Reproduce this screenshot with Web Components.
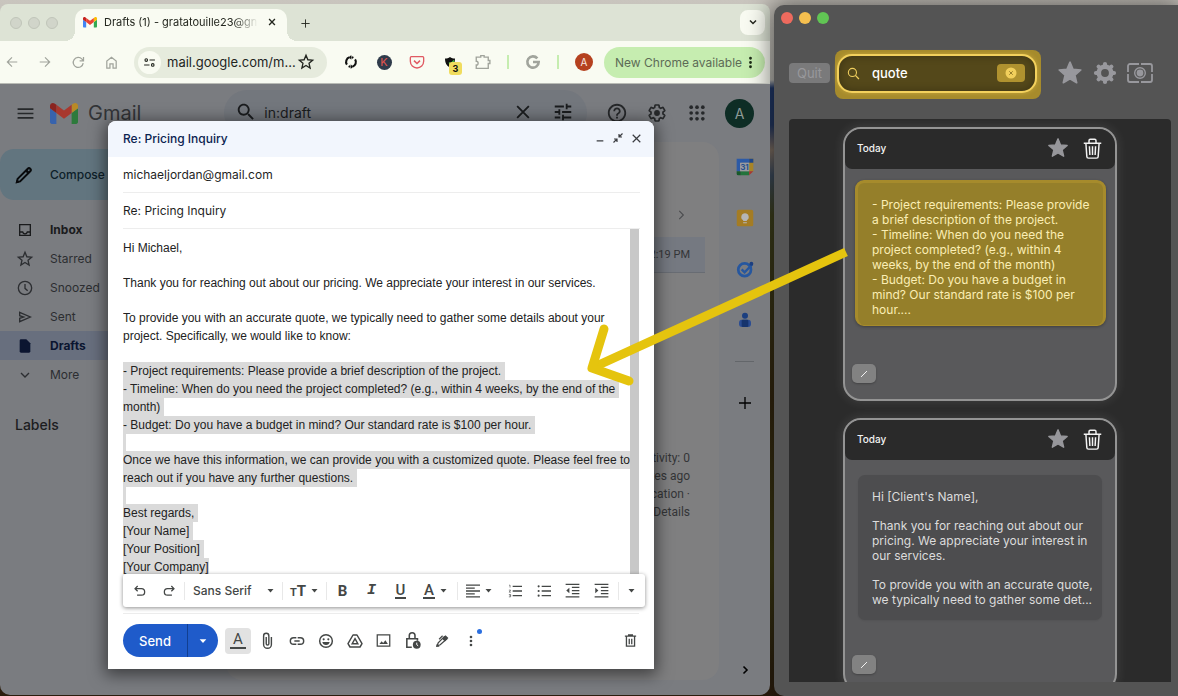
<!DOCTYPE html>
<html lang="en">
<head>
<meta charset="utf-8">
<title>Drafts (1)</title>
<style>
html, body { margin: 0; height: 100%; overflow: hidden; }
body { font-family: Inter, "Liberation Sans", sans-serif; }
</style>
</head>
<body>
<desk-top></desk-top>
<script>
const BASE = `:host,*{box-sizing:border-box}
button,input,select{font:inherit;color:inherit;background:none;border:0;padding:0;margin:0;outline:0;min-width:0}
button,a{display:flex;align-items:center;justify-content:center;flex:none;text-decoration:none;color:inherit;white-space:nowrap}`;

function define(name, css, html) {
  const tpl = document.createElement('template');
  tpl.innerHTML = `<style>${BASE}${css}</style>${html}`;
  customElements.define(name, class extends HTMLElement {
    constructor() {
      super();
      this.attachShadow({ mode: 'open' }).append(tpl.content.cloneNode(true));
    }
  });
}

const line = (d, w = 2) => `<path d="${d}" fill="none" stroke="currentColor" stroke-width="${w}"/>`;
const fill = d => `<path d="${d}" fill="currentColor"/>`;
const GEAR = 'M19.14 12.94c.04-.3.06-.61.06-.94 0-.32-.02-.64-.07-.94l2.03-1.58a.49.49 0 0 0 .12-.61l-1.92-3.32a.488.488 0 0 0-.59-.22l-2.39.96c-.5-.38-1.03-.7-1.62-.94l-.36-2.54a.484.484 0 0 0-.48-.41h-3.84c-.24 0-.43.17-.47.41l-.36 2.54c-.59.24-1.13.57-1.62.94l-2.39-.96c-.22-.08-.47 0-.59.22L2.74 8.87c-.12.21-.08.47.12.61l2.03 1.58c-.05.3-.09.63-.09.94s.02.64.07.94l-2.03 1.58a.49.49 0 0 0-.12.61l1.92 3.32c.12.22.37.29.59.22l2.39-.96c.5.38 1.03.7 1.62.94l.36 2.54c.05.24.24.41.48.41h3.84c.24 0 .44-.17.47-.41l.36-2.54c.59-.24 1.13-.56 1.62-.94l2.39.96c.22.08.47 0 .59-.22l1.92-3.32c.12-.22.07-.47-.12-.61l-2.01-1.58z';
const STAR = 'M12 17.27 18.18 21l-1.64-7.03L22 9.24l-7.19-.61L12 2 9.19 8.63 2 9.24l5.46 4.73L5.82 21z';
const ICONS = {
  back: line('M21 12H4M12 4l-8 8 8 8'),
  forward: line('M3 12h17M12 4l8 8-8 8'),
  reload: line('M19.5 13A8 8 0 1 1 17.6 6.6L20 9M20 3v6.2h-6.2'),
  home: line('M4.5 21V9.5L12 3.5l7.5 6V21h-5v-7h-5v7z'),
  site: `<circle cx="6" cy="7.5" r="2.4" fill="none" stroke="currentColor" stroke-width="2"/><circle cx="18" cy="16.5" r="2.4" fill="none" stroke="currentColor" stroke-width="2"/>` + line('M12 7.5h10M2 16.5h10'),
  staro: `<path d="${STAR}" fill="none" stroke="currentColor" stroke-width="2"/>`,
  star: `<path d="${STAR}" fill="currentColor" stroke="currentColor" stroke-width="1.5" stroke-linejoin="round"/>`,
  sync: line('M9.500 4A8.200 8.200 0 0 0 5 16.500M14.500 20A8.200 8.200 0 0 0 19 7.500', 3.600) + line('M13 3.800A8.200 8.200 0 0 1 16 4.800M11 20.200A8.200 8.200 0 0 1 8 19.200', 3.600) + fill('M12.500 0v8l-4-4zM11.500 24v-8l4 4z'),
  pocket: line('M3.5 4h17a1.5 1.5 0 0 1 1.5 1.5V11a10 10 0 0 1-20 0V5.500A1.5 1.500 0 0 1 3.500 4z') + line('M7.500 10l4.500 4.200 4.500-4.200', 2.4),
  shield: fill('M2 5c4 0 7-1 10-3 3 2 6 3 10 3 0 9-3 14-10 18C5 19 2 14 2 5z') + '<path d="M10 13l3 3 7-7" fill="none" stroke="#43c443" stroke-width="2.500"/>',
  puzzle: line('M3 7.500V5.500h6V3.500h4.500v2H19V10h2.200v4H19v6.500H3V16a2.500 2.500 0 0 0 0-5z', 1.800),
  google: line('M18.5 6.500A8.500 8.500 0 1 0 20.500 12H12', 4),
  dots: fill('M12 8a2 2 0 1 0 0-4 2 2 0 0 0 0 4zm0 2a2 2 0 1 0 0 4 2 2 0 0 0 0-4zm0 6a2 2 0 1 0 0 4 2 2 0 0 0 0-4z'),
  chev: line('M6 9l6 6 6-6', 3),
  chevthin: line('M6 9l6 6 6-6', 2),
  right: line('M9 5l7 7-7 7', 2),
  rightbold: line('M9 5l7 7-7 7', 3.200),
  plus: line('M12 3v18M3 12h18', 2),
  close: line('M5 5l14 14M19 5L5 19', 2.200),
  closebold: line('M5 5l14 14M19 5L5 19', 3.200),
  menu: fill('M2 18.500h20v-2H2zm0-5.500h20v-2H2zm0-7.500v2h20v-2z'),
  search: fill('M15.500 14h-.79l-.28-.27C15.410 12.590 16 11.110 16 9.500 16 5.910 13.090 3 9.500 3S3 5.910 3 9.500 5.910 16 9.500 16c1.610 0 3.090-.59 4.230-1.570l.27.28v.79l5 4.990L20.490 19l-4.990-5zm-6 0C7.010 14 5 11.990 5 9.500S7.010 5 9.500 5 14 7.010 14 9.500 11.990 14 9.500 14z'),
  tune: fill('M3 17v2h6v-2H3zM3 5v2h10V5H3zm10 16v-2h8v-2h-8v-2h-2v6h2zM7 9v2H3v2h4v2h2V9H7zm14 4v-2H11v2h10zm-6-4h2V7h4V5h-4V3h-2v6z'),
  help: fill('M11 18h2v-2h-2v2zm1-16C6.480 2 2 6.480 2 12s4.480 10 10 10 10-4.480 10-10S17.520 2 12 2zm0 18c-4.410 0-8-3.590-8-8s3.590-8 8-8 8 3.590 8 8-3.590 8-8 8zm0-14c-2.210 0-4 1.790-4 4h2c0-1.100.9-2 2-2s2 .9 2 2c0 2-3 1.750-3 5h2c0-2.250 3-2.500 3-5 0-2.210-1.790-4-4-4z'),
  gear: line(GEAR) + '<circle cx="12" cy="12" r="3.500" fill="currentColor"/>',
  cog: '<g fill="none" stroke="currentColor"><circle cx="12" cy="12" r="6.200" stroke-width="4.600"/><path stroke-width="4.200" stroke-linecap="round" d="M12 3v2M12 19v2M3 12h2M19 12h2M5.640 5.640l1.400 1.400M16.960 16.960l1.400 1.400M5.640 18.360l1.400-1.400M16.960 7.040l1.400-1.400"/></g>',
  capture: '<g fill="none" stroke="currentColor" stroke-width="1.800"><path d="M11 3H2A2 2 0 0 0 0 5v6M13 3h9a2 2 0 0 1 2 2v6M0 13V19a2 2 0 0 0 2 2h9M24 13V19a2 2 0 0 1-2 2h-9"/><circle cx="12" cy="12" r="5.300" stroke-width="1.400"/></g><circle cx="12" cy="12" r="3.400" fill="currentColor"/>',
  apps: '<g fill="currentColor">' + [5, 12, 19].flatMap(y => [5, 12, 19].map(x => `<circle cx="${x}" cy="${y}" r="2.200"/>`)).join('') + '</g>',
  pencil: '<path d="M3.500 20.500l.8-3.800L16.500 4.500a2 2 0 0 1 3 3L7.300 19.700z" fill="none" stroke="currentColor" stroke-width="2.400"/>' + line('M14.500 6.500l3 3', 3) + fill('M2 22l1-4 3 3z'),
  inbox: line('M4 4h16v16H4zM4 15h4.500a3.600 3.600 0 0 0 7 0H20'),
  clock: '<circle cx="12" cy="12" r="10" fill="none" stroke="currentColor" stroke-width="2"/>' + line('M12 6V12.500l4 3.500'),
  send: line('M4 5l16 7-16 7v-5l6-2-6-2z'),
  file: fill('M4 4a2 2 0 0 1 2-2h8l6 6v12a2 2 0 0 1-2 2H6a2 2 0 0 1-2-2z'),
  minimise: line('M4 19h16', 3),
  shrink: line('M21 3l-7 7M14 4v6h6M3 21l7-7M4 14h6v6', 2.400),
  caret: fill('M4 8h16l-8 9z'),
  undo: line('M8 3.500L3.500 8 8 12.500M4 8h10.500a5.500 5.500 0 0 1 0 11H7', 2.200),
  redo: line('M16 3.500L20.500 8 16 12.500M20 8H9.500a5.500 5.500 0 0 0 0 11H17', 2.200),
  left: line('M0 2h24M0 7h15M0 12h24M0 17h15M0 22h24', 2.200),
  olist: line('M8 4h16M8 12h16M8 20h16', 2.200) + line('M2 2h1.500v4M1.500 10.500h3L2 14h3M1.500 18H4.500v4H1.500M2.500 20h2', 1.100),
  ulist: line('M8 4h16M8 12h16M8 20h16', 2.200) + '<g fill="currentColor"><circle cx="2.800" cy="4" r="1.800"/><circle cx="2.800" cy="12" r="1.800"/><circle cx="2.800" cy="20" r="1.800"/></g>',
  outdent: line('M1 2h22M11 7h12M11 12h12M11 17h12M1 22h22', 2) + fill('M7 7.500v9L2 12z'),
  indent: line('M1 2h22M11 7h12M11 12h12M11 17h12M1 22h22', 2) + fill('M2 7.500v9L7 12z'),
  clip: line('M17.500 7v10.500a5.500 5.500 0 0 1-11 0V5.500a3.700 3.700 0 0 1 7.400 0v11a1.800 1.800 0 0 1-3.700 0V7', 2),
  link: line('M11 17H7A5 5 0 0 1 7 7h4M13 7h4a5 5 0 0 1 0 10h-4M8 12h8', 2.200),
  smile: '<circle cx="12" cy="12" r="9.500" fill="none" stroke="currentColor" stroke-width="2.200"/><circle cx="8.500" cy="9.500" r="1.600" fill="currentColor"/><circle cx="15.500" cy="9.500" r="1.600" fill="currentColor"/>' + fill('M6.500 13.500h11a5.600 5.600 0 0 1-11 0z'),
  drive: '<path d="M9 3h6l7.500 13-3 5h-15l-3-5z" fill="none" stroke="currentColor" stroke-width="2.200" stroke-linejoin="round"/>' + line('M12 8.500l4.200 7.500H7.800z', 2.200),
  image: line('M2 3h20v18H2z') + fill('M5.500 17.500l3.500-4.500 2.500 3 3.500-4.500 4 6z'),
  lock: line('M11 21.500H4v-12h15v3M7.500 9.500V5a4 4 0 0 1 8 0v4.500', 2.200) + '<circle cx="18" cy="18" r="5.500" fill="currentColor"/><path d="M18 15v3l2 1.500" fill="none" stroke="#fff" stroke-width="1.400"/>',
  pen: line('M3.500 20.500l2-5.500L16 4.500l4 4L9 18.500z', 2.200) + fill('M12 8l6-6 5 5-6 6zM2 22h6l-5-5z') + line('M13 3l-6 6', 2),
  bin: line('M5.500 6v15h13V6M3 5h18M9 5V3h6v2M10 9v9M14 9v9', 2.100),
  trash: line('M4.500 6.500l1 14.500a2 2 0 0 0 2 2h9a2 2 0 0 0 2-2l1-14.500M2 6h20M8 6V3a1.500 1.500 0 0 1 1.500-1.500h5A1.500 1.500 0 0 1 16 3v3M8.500 9.500l.5 10M12 9.500v10M15.500 9.500l-.5 10', 1.700),
  slash: '<path d="M4 20L20 4" stroke="currentColor" stroke-width="3" stroke-linecap="round"/>',
  lens: '<circle cx="10" cy="10" r="7.500" fill="none" stroke="currentColor" stroke-width="2"/>' + line('M15.500 15.500L22 22', 2.400),
  clear: '<circle cx="12" cy="12" r="11" fill="#f2cf5c"/><path d="M8.500 8.500l7 7M15.500 8.500l-7 7" stroke="#7a631b" stroke-width="1.500"/>',
  calendar: '<path d="M2 2h15v5H7v10H2z" fill="#2c5aa6"/><path d="M17 2h5v5h-5zM17 7h5v10h-5z" fill="#a88427"/><path d="M17 2h5v5h-5z" fill="#1f4689"/><path d="M7 17h10v5H7z" fill="#23733b"/><path d="M2 17h5v5H4a2 2 0 0 1-2-2z" fill="#185a2b"/><path d="M17 17h5l-5 5z" fill="#a8372e"/><path d="M6 7h11v10H6z" fill="#9a9ca0"/>',
  keep: '<rect x="1" y="1" width="22" height="22" rx="2.500" fill="#a47c24"/><path d="M12 5.500a5 5 0 0 0-2.500 9.300V16h5v-1.200A5 5 0 0 0 12 5.500zM9.500 17.500h5V19h-5z" fill="#b5b5b5"/>',
  tasks: '<circle cx="11.500" cy="13" r="8.500" fill="none" stroke="#26579f" stroke-width="3.600"/><path d="M7.500 12.500l4 4L21.500 6" fill="none" stroke="#26579f" stroke-width="3.200"/><circle cx="20.500" cy="5" r="2.600" fill="#1c3f80"/>',
  contacts: '<circle cx="12" cy="5.500" r="4.500" fill="#1b3f80"/><rect x="3" y="11.500" width="18" height="11" rx="4.500" fill="#2b4d93"/><rect x="7" y="11.500" width="10" height="11" rx="2" fill="#16346d"/>',
  gmail: '<svg viewBox="0 49 512 400" width="24" height="24"><path fill="var(--b,#4285f4)" d="M34.910 448.818h81.454V251L0 163.727V413.910c0 19.287 15.622 34.910 34.910 34.910z"/><path fill="var(--g,#34a853)" d="M395.636 448.818h81.455c19.287 0 34.909-15.622 34.909-34.909V163.727L395.636 251z"/><path fill="var(--y,#fbbc04)" d="M395.636 99.727V251L512 163.727v-46.545c0-43.142-49.250-67.782-83.782-41.891z"/><path fill="var(--r,#ea4335)" d="M116.364 251V99.727L256 204.454 395.636 99.727V251L256 355.727z"/><path fill="var(--d,#c5221f)" d="M0 117.182v46.545L116.364 251V99.727L83.782 75.290C49.250 49.400 0 74.040 0 117.180z"/></svg>'
};

customElements.define('ui-icon', class extends HTMLElement {
  connectedCallback() {
    if (this.shadowRoot) return;
    const s = this.getAttribute('size') || 16;
    this.attachShadow({ mode: 'open' }).innerHTML =
      `<style>:host{display:block;flex:none;width:${s}px;height:${s}px}svg{display:block;overflow:visible}</style>
       <svg viewBox="0 0 24 24" width="${s}" height="${s}" aria-hidden="true">${ICONS[this.getAttribute('name')]}</svg>`;
  }
});

define('traffic-lights', `
  :host{display:flex;gap:6px}
  i{width:12px;height:12px;border-radius:50%;background:#d1d5ca;border:1px solid #c0c5b9}
  :host([active]) i{border:0}
  :host([active]) i:nth-of-type(1){background:#ed6a5e}
  :host([active]) i:nth-of-type(2){background:#f5bf4f}
  :host([active]) i:nth-of-type(3){background:#61c554}`,
  `<i></i><i></i><i></i>`);

define('tab-strip', `
  :host{display:flex;align-items:center;height:37px;flex:none;padding:5px 5px 0 10px;background:#dde3d5;color:#24271f}
  .tab{position:relative;display:flex;align-items:center;width:212px;height:32px;margin:0 9px 0 17px;padding:0 10px 6px 8px;background:#f9fbf2;border-radius:10px 10px 0 0}
  .tab::before,.tab::after{content:"";position:absolute;bottom:0;width:10px;height:10px}
  .tab::before{left:-10px;background:radial-gradient(circle at 0 0,transparent 10px,#f9fbf2 10px)}
  .tab::after{right:-10px;background:radial-gradient(circle at 100% 0,transparent 10px,#f9fbf2 10px)}
  .title{flex:1;min-width:0;margin:0 8px 0 7px;font-size:11px;white-space:nowrap;-webkit-mask-image:linear-gradient(90deg,#000 130px,transparent 154px)}
  traffic-lights,.new{margin-bottom:4px}
  .new{width:18px;height:18px}
  .more{width:25px;height:25px;margin:0 0 6px auto;border-radius:8px;background:#f9fbf2}`,
  `<traffic-lights></traffic-lights>
   <div class="tab"><ui-icon name="gmail" size="14"></ui-icon><span class="title">Drafts (1) - gratatouille23@gn</span><button aria-label="Close tab"><ui-icon name="closebold" size="10"></ui-icon></button></div>
   <button class="new" aria-label="New tab"><ui-icon name="plus" size="11"></ui-icon></button>
   <button class="more" aria-label="Search tabs"><ui-icon name="chev" size="12"></ui-icon></button>`);

define('browser-toolbar', `
  :host{display:flex;align-items:center;height:42px;flex:none;padding-right:5px;background:#f9fbf2;color:#22251f}
  .set{display:flex;gap:9px;color:#a1a49c}
  .set button{width:24px;height:24px}
  .url{flex:1;display:flex;align-items:center;height:31px;min-width:0;margin:0 12px 0 11px;padding:0 13px 0 4px;border-radius:16px;background:#e6ebdd}
  .site{width:23px;height:23px;border-radius:50%;background:#f9fbf2}
  input{flex:1;margin-left:6px;font-size:13px}
  .shield{position:relative}
  .shield b{position:absolute;left:11px;top:12px;width:13px;height:13px;border-radius:3px;background:#f0dc5e;font-size:9px;line-height:13px;text-align:center}
  .k{width:15px;height:15px;border-radius:50%;background:#2f3b4b;color:#e2544f;font-size:11px;line-height:15px;text-align:center}
  i{width:2px;height:14px;margin:0 12px;background:#c6edb0}
  .me{width:18px;height:18px;margin:0 11px 0 16px;border-radius:50%;background:#b5411f;color:#f8e9e2;font-size:10px}
  .update{height:31px;width:161px;padding:0 6px 0 11px;border-radius:16px;background:#c6edb0;color:#5d6b56;font-size:12px;justify-content:space-between}
  .update ui-icon{color:#1c2a16}`,
  `<nav class="set"><button aria-label="Back"><ui-icon name="back" size="14"></ui-icon></button><button aria-label="Forward"><ui-icon name="forward" size="14"></ui-icon></button><button aria-label="Reload"><ui-icon name="reload" size="15"></ui-icon></button><button aria-label="Home"><ui-icon name="home" size="15"></ui-icon></button></nav>
   <div class="url"><button class="site" aria-label="Site information"><ui-icon name="site" size="13"></ui-icon></button><input aria-label="Address" value="mail.google.com/m..."><button aria-label="Bookmark"><ui-icon name="staro" size="16"></ui-icon></button></div>
   <div class="set"><button aria-label="Sync" style="color:#111"><ui-icon name="sync" size="14"></ui-icon></button><button aria-label="Extension K"><span class="k">K</span></button><button aria-label="Pocket" style="color:#e05a63"><ui-icon name="pocket" size="16"></ui-icon></button><button class="shield" aria-label="Blocker" style="color:#111"><ui-icon name="shield" size="12"></ui-icon><b>3</b></button><button aria-label="Extensions"><ui-icon name="puzzle" size="18"></ui-icon></button></div>
   <i></i><div class="set"><button aria-label="Google"><ui-icon name="google" size="16"></ui-icon></button></div><i style="margin-right:0"></i>
   <button class="me" aria-label="Profile">A</button>
   <button class="update">New Chrome available<ui-icon name="dots" size="17"></ui-icon></button>`);

define('gmail-header', `
  :host{display:flex;align-items:center;height:58px;flex:none;color:#26282a}
  .menu{width:50px}
  .brand{font-size:20px;gap:10px;margin-right:83px;color:#323437}
  .brand ui-icon{--b:#3763ad;--g:#2d7a3c;--y:#b98a26;--r:#a8382e;--d:#8a2420}
  .search{flex:1;display:flex;align-items:center;height:46px;min-width:0;padding:0 14px 2px 12px;border-radius:23px;background:#73777d;color:#1a1c1e}
  input{flex:1;margin:0 8px;font-size:14px}
  .search button{width:20px;margin-right:20px}
  .search button:first-of-type,.search button:last-of-type{margin-right:0}
  .tools{display:flex;gap:10px;margin:0 16px 0 15px}
  .tools button{width:30px}
  .tools .me{width:29px;height:29px;margin-left:3px;border-radius:50%;background:#0e2d25;color:#8d9a96;font-size:14px}`,
  `<button class="menu" aria-label="Main menu"><ui-icon name="menu" size="19"></ui-icon></button>
   <a class="brand" href="#"><ui-icon name="gmail" size="28"></ui-icon>Gmail</a>
   <div class="search"><button aria-label="Search"><ui-icon name="search" size="22"></ui-icon></button><input aria-label="Search mail" value="in:draft"><button aria-label="Clear search"><ui-icon name="close" size="20"></ui-icon></button><button aria-label="Search options"><ui-icon name="tune" size="22"></ui-icon></button></div>
   <div class="tools"><button aria-label="Support"><ui-icon name="help" size="22"></ui-icon></button><button aria-label="Settings"><ui-icon name="gear" size="20"></ui-icon></button><button aria-label="Apps"><ui-icon name="apps" size="20"></ui-icon></button><button class="me" aria-label="Account">A</button></div>`);

define('nav-item', `
  :host{display:block;height:29px}
  a{height:29px;justify-content:flex-start;padding-left:17px;gap:17px;font-size:12px;border-radius:0 14px 14px 0;color:#2c2e31}
  :host([bold]) a{font-weight:700;color:#1a1b1d}
  :host([active]) a{background:#686f7e;color:#0b1530}`,
  `<a href="#"><slot name="icon"></slot><slot></slot></a>`);

define('gmail-sidebar', `
  :host{display:block;width:226px;flex:none;padding-top:7px}
  .compose{width:140px;height:51px;margin-bottom:15px;padding-left:14px;gap:16px;justify-content:flex-start;border-radius:14px;background:#62757f;color:#0d2029;font-size:12px;font-weight:500}
  .compose ui-icon{color:#080a0c}
  h2{margin:24px 0 0 15px;font-size:14px;font-weight:500;line-height:24px;color:#1c1d1f}`,
  `<button class="compose"><ui-icon name="pencil" size="20"></ui-icon>Compose</button>
   <nav>
   <nav-item bold><ui-icon slot="icon" name="inbox" size="16"></ui-icon>Inbox</nav-item>
   <nav-item><ui-icon slot="icon" name="staro" size="16"></ui-icon>Starred</nav-item>
   <nav-item><ui-icon slot="icon" name="clock" size="16"></ui-icon>Snoozed</nav-item>
   <nav-item><ui-icon slot="icon" name="send" size="16"></ui-icon>Sent</nav-item>
   <nav-item bold active><ui-icon slot="icon" name="file" size="16"></ui-icon>Drafts</nav-item>
   <nav-item><ui-icon slot="icon" name="chevthin" size="16"></ui-icon>More</nav-item>
   </nav><h2>Labels</h2>`);

define('mail-list', `
  :host{display:block;flex:1;min-width:0;margin-bottom:15px;padding:66px 14px 0;border-radius:16px;background:#7f7f80;color:#343537;font-family:Roboto,sans-serif}
  .pager{margin:0 17px 15px auto;color:#4c4d4f}
  .row{display:flex;align-items:center;justify-content:flex-end;height:36px;padding-right:15px;background:#757981;border-bottom:1px solid #686c73;font-size:11px}
  footer{margin:176px 15px 0 0;font-size:12px;line-height:18px;text-align:right;white-space:nowrap}`,
  `<button class="pager" aria-label="Older"><ui-icon name="right" size="14"></ui-icon></button>
   <div class="row">2:19 PM</div>
   <footer>activity: 0<br>minutes ago<br>location ·<br>Details</footer>`);

define('side-panel', `
  :host{display:flex;flex-direction:column;align-items:center;gap:31px;width:51px;flex:none;padding:15px 0 15px}
  button{width:20px;height:20px}
  .cal{position:relative}
  .cal b{position:absolute;inset:0;font-size:8px;line-height:20px;text-align:center;color:#27508f}
  hr{width:19px;height:1px;margin:0;border:0;background:#63666a}
  .end{margin-top:auto}`,
  `<button class="cal" aria-label="Calendar"><ui-icon name="calendar" size="20"></ui-icon><b>31</b></button>
   <button aria-label="Keep"><ui-icon name="keep" size="18"></ui-icon></button>
   <button aria-label="Tasks"><ui-icon name="tasks" size="18"></ui-icon></button>
   <button aria-label="Contacts"><ui-icon name="contacts" size="16"></ui-icon></button>
   <hr><button aria-label="Get add-ons"><ui-icon name="plus" size="16"></ui-icon></button>
   <button class="end" aria-label="Hide side panel"><ui-icon name="rightbold" size="12"></ui-icon></button>`);

define('format-bar', `
  :host{display:flex;align-items:center;height:33px;padding:0 2px;background:#fff;border-radius:3px;box-shadow:0 1px 4px rgba(0,0,0,.45);color:#444746;position:relative}
  button{width:29px;height:29px;font-size:15px;font-family:Roboto,sans-serif}
  .wide{width:41px;gap:4px}
  i{width:1px;height:18px;margin:0 1px;background:#e8e8e8;flex:none}
  label{display:flex;align-items:center;width:95px;flex:none;padding-left:7px}
  select{appearance:none;width:73px;font-size:12px;font-weight:500}
  .tt{font-weight:700;font-size:15px}.tt small{font-size:11px}
  .ul{border-bottom:2px solid;font-weight:500;line-height:14px;padding:0 1px}
  .spring{flex:1}`,
  `<button aria-label="Undo"><ui-icon name="undo" size="14"></ui-icon></button><button aria-label="Redo"><ui-icon name="redo" size="14"></ui-icon></button><i></i>
   <label><select aria-label="Font"><option>Sans Serif</option></select><ui-icon name="caret" size="9"></ui-icon></label><i></i>
   <button class="wide" aria-label="Size"><span class="tt"><small>T</small>T</span><ui-icon name="caret" size="9"></ui-icon></button><i></i>
   <button aria-label="Bold"><b>B</b></button><button aria-label="Italic"><b style="font-family:'Liberation Mono',monospace;font-style:italic">I</b></button><button aria-label="Underline"><span class="ul">U</span></button>
   <button class="wide" aria-label="Text colour"><span class="ul">A</span><ui-icon name="caret" size="9"></ui-icon></button><i></i>
   <button class="wide" aria-label="Align"><ui-icon name="left" size="14"></ui-icon><ui-icon name="caret" size="9"></ui-icon></button>
   <button aria-label="Numbered list"><ui-icon name="olist" size="14"></ui-icon></button><button aria-label="Bulleted list"><ui-icon name="ulist" size="14"></ui-icon></button><button aria-label="Indent less"><ui-icon name="outdent" size="15"></ui-icon></button><button aria-label="Indent more"><ui-icon name="indent" size="15"></ui-icon></button>
   <span class="spring"></span><i></i><button aria-label="More options" style="width:23px"><ui-icon name="caret" size="9"></ui-icon></button>`);

define('compose-dialog', `
  :host{display:flex;flex-direction:column;background:#fff;border-radius:8px 8px 0 0;box-shadow:0 3px 16px 3px rgba(0,0,0,.5);color:#1f1f1f}
  header{display:flex;align-items:center;height:36px;flex:none;padding:0 9px 2px 15px;background:#f2f6fd;border-radius:8px 8px 0 0;font-size:12px;font-weight:500;color:#0b2350}
  header span{flex:1}
  header button{width:18px;height:18px;color:#3a3c40}
  .field{display:block;height:36px;flex:none;margin:0 14px 0 15px;border-bottom:1px solid #ededed;font-size:12px}
  input{width:100%;height:35px}
  .body{display:flex;flex:1;min-height:0;margin:0 15px 0;font:12px "Liberation Sans",Arial,sans-serif;line-height:18px;color:#222;overflow:hidden}
  .text{flex:1;min-width:0;padding-top:10px;white-space:nowrap}
  .bar{width:9px;flex:none;background:#c8c8c8}
  p{margin:0}
  p+p{margin-top:17px}
  mark{display:block;width:fit-content;padding-right:4px;background:#dadada;color:inherit}
  .gap{height:17px;width:3px;background:#dadada}
  .gap+p{margin-top:0}
  format-bar{margin:0 9px 0 15px;flex:none}
  hr{width:auto;height:1px;flex:none;margin:6px 15px 10px;border:0;background:#ececec}
  footer{display:flex;align-items:center;flex:none;height:33px;margin:0 9px 12px 15px;color:#444746}
  .send{display:flex;width:95px;height:33px;margin-right:7px;border-radius:17px;background:#1f5bca;color:#fff;font-size:13px;font-weight:500;overflow:hidden;flex:none}
  .send button:first-child{flex:1;border-right:1px solid #123f91}
  .send button:last-child{width:30px}
  .tool{width:29px;height:29px;position:relative}
  .fmt{width:26px;height:26px;margin-right:2px;border-radius:4px;background:#e2e2e2;font:15px Roboto,sans-serif}
  .fmt span{border-bottom:2px solid;line-height:15px;padding:0 3px}
  .tool u{position:absolute;right:3px;top:3px;width:5px;height:5px;border-radius:50%;background:#2b6fe0}
  .del{margin-left:auto}`,
  `<header><span>Re: Pricing Inquiry</span><button aria-label="Minimise"><ui-icon name="minimise" size="10"></ui-icon></button><button aria-label="Exit full screen"><ui-icon name="shrink" size="12"></ui-icon></button><button aria-label="Close"><ui-icon name="close" size="13"></ui-icon></button></header>
   <label class="field"><input aria-label="To" value="michaeljordan@gmail.com"></label>
   <label class="field"><input aria-label="Subject" value="Re: Pricing Inquiry"></label>
   <div class="body"><div class="text" role="textbox" aria-label="Message body">
     <p>Hi Michael,</p>
     <p>Thank you for reaching out about our pricing. We appreciate your interest in our services.</p>
     <p>To provide you with an accurate quote, we typically need to gather some details about your<br>project. Specifically, we would like to know:</p>
     <p><mark>- Project requirements: Please provide a brief description of the project.</mark><mark>- Timeline: When do you need the project completed? (e.g., within 4 weeks, by the end of the</mark><mark>month)</mark><mark>- Budget: Do you have a budget in mind? Our standard rate is $100 per hour.</mark></p>
     <div class="gap"></div>
     <p><mark style="padding:0">Once we have this information, we can provide you with a customized quote. Please feel free to</mark><mark>reach out if you have any further questions.</mark></p>
     <div class="gap"></div>
     <p><mark>Best regards,</mark><mark>[Your Name]</mark><mark>[Your Position]</mark><mark style="padding:0">[Your Company]</mark></p>
   </div><div class="bar"></div></div>
   <format-bar></format-bar><hr>
   <footer><div class="send"><button>Send</button><button aria-label="More send options"><ui-icon name="caret" size="10"></ui-icon></button></div>
   <button class="fmt" aria-label="Formatting options"><span>A</span></button>
   <button class="tool" aria-label="Attach files"><ui-icon name="clip" size="17"></ui-icon></button><button class="tool" aria-label="Insert link"><ui-icon name="link" size="16"></ui-icon></button><button class="tool" aria-label="Insert emoji"><ui-icon name="smile" size="16"></ui-icon></button><button class="tool" aria-label="Insert from Drive"><ui-icon name="drive" size="16"></ui-icon></button><button class="tool" aria-label="Insert photo"><ui-icon name="image" size="15"></ui-icon></button><button class="tool" aria-label="Confidential mode"><ui-icon name="lock" size="17"></ui-icon></button><button class="tool" aria-label="Insert signature"><ui-icon name="pen" size="14"></ui-icon></button><button class="tool" aria-label="More options"><ui-icon name="dots" size="16"></ui-icon><u></u></button>
   <button class="tool del" aria-label="Discard draft"><ui-icon name="bin" size="15"></ui-icon></button></footer>`);

define('gmail-page', `
  :host{display:flex;flex-direction:column;flex:1;min-height:0;position:relative;background:#7a7c80;border-top:1px solid #b9bbb5}
  main{display:flex;flex:1;min-height:0}
  compose-dialog{position:absolute;left:108px;right:116px;top:37px;bottom:26px}`,
  `<gmail-header></gmail-header><main><gmail-sidebar></gmail-sidebar><mail-list></mail-list><side-panel></side-panel></main><compose-dialog></compose-dialog>`);

define('browser-window', `
  :host{display:flex;flex-direction:column;min-width:0;overflow:hidden;border-radius:8px 8px 10px 10px}`,
  `<tab-strip></tab-strip><browser-toolbar></browser-toolbar><gmail-page></gmail-page>`);

define('clip-card', `
  :host{display:flex;flex-direction:column;flex:none;width:274px;height:274px;border:2px solid #949494;border-radius:18px;background:#59595b;box-shadow:0 0 12px rgba(255,255,255,.12);overflow:hidden}
  header{display:flex;align-items:center;height:40px;flex:none;padding:0 12px 2px;border-radius:0 0 7px 7px;background:#2a2a2a;color:#f2f2f2;font-size:10px;font-weight:500}
  header span{flex:1}
  header button{width:22px;margin-left:12px}
  .fav{color:#97979b}
  .note{flex:none;height:145px;margin:15px 13px 0 13px;padding:14px 0 0 14px;border-radius:7px;background:#4d4d4f;color:#dcdcdc;font-size:12px;line-height:15px;white-space:nowrap;box-shadow:0 1px 2px rgba(0,0,0,.08)}
  :host([hit]) .note{height:146px;margin:11px 9px 0 10px;padding:14px 0 0 14px;border:3px solid #a68b2c;border-bottom-width:1px;border-radius:9px;background:#957f2a;color:#fbeeb4;box-shadow:0 1px 3px rgba(0,0,0,.3)}
  .edit{width:24px;height:19px;margin:auto 0 16px 7px;border-radius:5px;background:#828282;color:#f4f4f4;box-shadow:0 1px 2px rgba(0,0,0,.25)}`,
  `<header><span>Today</span><button class="fav" aria-label="Favourite"><ui-icon name="star" size="22"></ui-icon></button><button aria-label="Delete"><ui-icon name="trash" size="21"></ui-icon></button></header>
   <div class="note"><slot></slot></div><button class="edit" aria-label="Edit"><ui-icon name="slash" size="8"></ui-icon></button>`);

define('clip-window', `
  :host{display:flex;flex-direction:column;min-width:0;padding:7px 7px 14px 15px;border-radius:10px 0 0 10px;background:#545454;box-shadow:0 0 24px 4px rgba(0,0,0,.5);margin-top:1px}
  traffic-lights{margin-left:-8px}
  .top{display:flex;align-items:center;height:50px;flex:none;margin:25px 0 20px}
  .quit{width:41px;height:20px;margin:0 5px 2px 0;border-radius:4px;background:#7a7a7b;color:#98989b;font-size:13px}
  .glow{flex:1;max-width:206px;min-width:0;padding:4px 4px 6px 2px;border-radius:8px;background:#a68b2c}
  .find{display:flex;align-items:center;height:39px;padding:0 10px 0 8px;border:2px solid #f3d15d;border-radius:15px;background:#54481a;box-shadow:inset 0 0 8px rgba(0,0,0,.3),0 0 4px #c9a93e}
  .find ui-icon{color:#f0cf5e}
  input{flex:1;margin:0 12px;color:#fff;font-size:13px;font-weight:500}
  .clear{width:28px;height:18px;border-radius:4px;background:#b0922f}
  .tools{display:flex;gap:9px;margin-left:16px;color:#98989d;padding-bottom:2px}
  .tools button{width:26px}
  .list{display:flex;flex-direction:column;align-items:center;gap:17px;flex:1;min-height:0;padding:8px 0 0;border-radius:4px 4px 0 0;background:#2b2b2b;overflow:hidden}
  .blank{height:14px}`,
  `<traffic-lights active></traffic-lights>
   <div class="top"><button class="quit">Quit</button>
   <div class="glow"><div class="find"><ui-icon name="lens" size="13"></ui-icon><input aria-label="Search clips" value="quote"><button class="clear" aria-label="Clear"><ui-icon name="clear" size="12"></ui-icon></button></div></div>
   <div class="tools"><button aria-label="Favourites"><ui-icon name="star" size="26"></ui-icon></button><button aria-label="Settings"><ui-icon name="cog" size="24"></ui-icon></button><button aria-label="Capture"><ui-icon name="capture" size="24"></ui-icon></button></div></div>
   <div class="list">
   <clip-card hit>- Project requirements: Please provide<br>a brief description of the project.<br>- Timeline: When do you need the<br>project completed? (e.g., within 4<br>weeks, by the end of the month)<br>- Budget: Do you have a budget in<br>mind? Our standard rate is $100 per<br>hour....</clip-card>
   <clip-card>Hi [Client's Name],<div class="blank"></div>Thank you for reaching out about our<br>pricing. We appreciate your interest in<br>our services.<div class="blank"></div>To provide you with an accurate quote,<br>we typically need to gather some det...</clip-card>
   </div>`);

define('desk-top', `
  :host{display:grid;position:relative;grid-template-columns:minmax(0,770fr) minmax(0,404fr);grid-template-rows:minmax(0,1fr);gap:4px;height:100vh;padding-top:4px;background:linear-gradient(180deg,#c9c5be 0,#b5b4ae 80px,#1f3667 88px,#22365f 125px,#7b6c60 150px,#3c4a5c 175px,#3d3f1c 215px,#33260f 400px,#3d3b14 560px,#2b1c0d 100%)}
  browser-window{margin-bottom:1px}
  .arrow{position:absolute;left:0;top:0;width:100%;height:100%;pointer-events:none}`,
  `<browser-window></browser-window><clip-window></clip-window>
   <svg class="arrow" aria-hidden="true"><g fill="none" stroke="#e5c40e" stroke-width="9"><path d="M846 252L592 368"/><path d="M604 329L592 368L629 381" stroke-linecap="round" stroke-linejoin="round"/></g></svg>`);
</script>
</body>
</html>
